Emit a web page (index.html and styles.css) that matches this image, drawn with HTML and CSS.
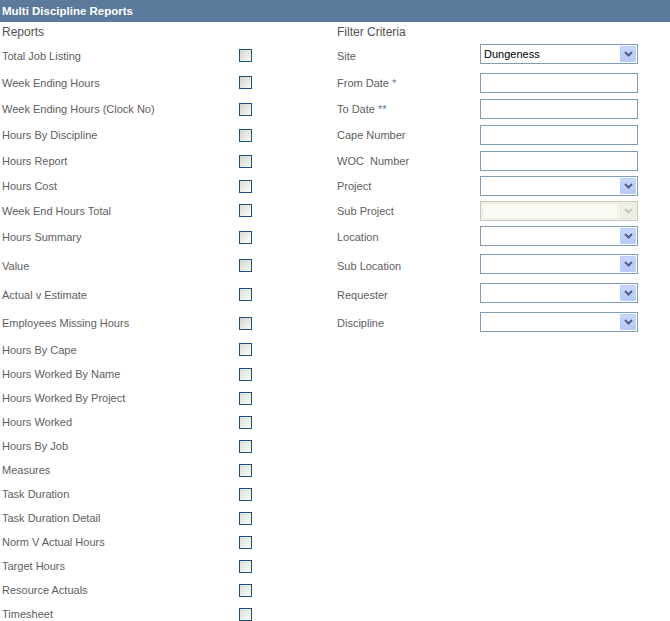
FILE: index.html
```html
<!DOCTYPE html>
<html>
<head>
<meta charset="utf-8">
<link rel="stylesheet" href="styles.css">
</head>
<body>
<div class="titlebar">Multi Discipline Reports</div>
<div class="form">
  <div class="row h20">
    <div class="heading">Reports</div><span></span>
    <div class="heading">Filter Criteria</div><span></span>
  </div>

  <div class="row h27">
    <div class="lbl">Total Job Listing</div><span class="cb grey"></span>
    <div class="lbl">Site</div>
    <div class="sel up"><span class="val">Dungeness</span><span class="btn"><svg width="9" height="6" viewBox="0 0 9 6"><path d="M1 1 L4.5 4.5 L8 1" fill="none" stroke="#4d6185" stroke-width="2"/></svg></span></div>
  </div>

  <div class="row h27">
    <div class="lbl">Week Ending Hours</div><span class="cb grey"></span>
    <div class="lbl">From Date <span class="star">*</span></div>
    <div class="inp"></div>
  </div>

  <div class="row h26">
    <div class="lbl">Week Ending Hours (Clock No)</div><span class="cb grey"></span>
    <div class="lbl">To Date <span class="star">**</span></div>
    <div class="inp"></div>
  </div>

  <div class="row h26">
    <div class="lbl">Hours By Discipline</div><span class="cb grey"></span>
    <div class="lbl">Cape Number</div>
    <div class="inp"></div>
  </div>

  <div class="row h26">
    <div class="lbl">Hours Report</div><span class="cb grey"></span>
    <div class="lbl">WOC&nbsp; Number</div>
    <div class="inp"></div>
  </div>

  <div class="row h24">
    <div class="lbl">Hours Cost</div><span class="cb"></span>
    <div class="lbl">Project</div>
    <div class="sel"><span class="val"></span><span class="btn"><svg width="9" height="6" viewBox="0 0 9 6"><path d="M1 1 L4.5 4.5 L8 1" fill="none" stroke="#4d6185" stroke-width="2"/></svg></span></div>
  </div>

  <div class="row h25">
    <div class="lbl">Week End Hours Total</div><span class="cb"></span>
    <div class="lbl">Sub Project</div>
    <div class="sel disabled"><span class="val"></span><span class="btn"><svg width="9" height="6" viewBox="0 0 9 6"><path d="M1 1 L4.5 4.5 L8 1" fill="none" stroke="#c9c7ba" stroke-width="2"/></svg></span></div>
  </div>

  <div class="row h28">
    <div class="lbl">Hours Summary</div><span class="cb"></span>
    <div class="lbl">Location</div>
    <div class="sel up"><span class="val"></span><span class="btn"><svg width="9" height="6" viewBox="0 0 9 6"><path d="M1 1 L4.5 4.5 L8 1" fill="none" stroke="#4d6185" stroke-width="2"/></svg></span></div>
  </div>

  <div class="row h29">
    <div class="lbl">Value</div><span class="cb grey"></span>
    <div class="lbl">Sub Location</div>
    <div class="sel up"><span class="val"></span><span class="btn"><svg width="9" height="6" viewBox="0 0 9 6"><path d="M1 1 L4.5 4.5 L8 1" fill="none" stroke="#4d6185" stroke-width="2"/></svg></span></div>
  </div>

  <div class="row h29">
    <div class="lbl">Actual v Estimate</div><span class="cb"></span>
    <div class="lbl">Requester</div>
    <div class="sel up"><span class="val"></span><span class="btn"><svg width="9" height="6" viewBox="0 0 9 6"><path d="M1 1 L4.5 4.5 L8 1" fill="none" stroke="#4d6185" stroke-width="2"/></svg></span></div>
  </div>

  <div class="row h28">
    <div class="lbl">Employees Missing Hours</div><span class="cb grey"></span>
    <div class="lbl">Discipline</div>
    <div class="sel up"><span class="val"></span><span class="btn"><svg width="9" height="6" viewBox="0 0 9 6"><path d="M1 1 L4.5 4.5 L8 1" fill="none" stroke="#4d6185" stroke-width="2"/></svg></span></div>
  </div>

  <div class="row h25"><div class="lbl">Hours By Cape</div><span class="cb"></span></div>
  <div class="row h24"><div class="lbl">Hours Worked By Name</div><span class="cb"></span></div>
  <div class="row h24"><div class="lbl">Hours Worked By Project</div><span class="cb"></span></div>
  <div class="row h24"><div class="lbl">Hours Worked</div><span class="cb"></span></div>
  <div class="row h24"><div class="lbl">Hours By Job</div><span class="cb"></span></div>
  <div class="row h24"><div class="lbl">Measures</div><span class="cb"></span></div>
  <div class="row h24"><div class="lbl">Task Duration</div><span class="cb"></span></div>
  <div class="row h24"><div class="lbl">Task Duration Detail</div><span class="cb"></span></div>
  <div class="row h24"><div class="lbl">Norm V Actual Hours</div><span class="cb"></span></div>
  <div class="row h24"><div class="lbl">Target Hours</div><span class="cb"></span></div>
  <div class="row h24"><div class="lbl">Resource Actuals</div><span class="cb"></span></div>
  <div class="row h24"><div class="lbl">Timesheet</div><span class="cb"></span></div>
</div>
</body>
</html>
```
FILE: styles.css
```css
html, body {
  margin: 0;
  padding: 0;
  background: #ffffff;
  font-family: "Liberation Sans", Arial, sans-serif;
  font-size: 11px;
  color: #5e5e5e;
}
.titlebar {
  height: 22px;
  line-height: 22px;
  background: #5b7a9c;
  color: #ffffff;
  font-weight: bold;
  font-size: 11.5px;
  padding-left: 2px;
}
.form {
  display: flex;
  flex-direction: column;
  padding-left: 2px;
}
.row {
  display: grid;
  grid-template-columns: 237px 13px 85px 143px 158px;
  align-items: center;
}
.row > :nth-child(3) { grid-column: 4; }
.h20 { height: 20px; }
.h24 { height: 24px; }
.h25 { height: 25px; }
.h26 { height: 26px; }
.h27 { height: 27px; }
.h28 { height: 28px; }
.h29 { height: 29px; }
.heading {
  font-size: 12px;
  color: #525252;
}
.lbl {
  white-space: nowrap;
}
.star { color: #5877a8; }
.cb {
  display: block;
  box-sizing: border-box;
  width: 13px;
  height: 13px;
  border: 1px solid #1c5180;
  background: linear-gradient(135deg, #dcdcd7 0%, #f0f0ec 60%, #fbfbf9 100%);
}
.cb.grey {
  background: linear-gradient(135deg, #d4d4cd 0%, #ebebe6 60%, #f7f7f4 100%);
}
.inp {
  box-sizing: border-box;
  height: 20px;
  width: 158px;
  border: 1px solid #7f9db9;
  background: #fff;
}
.sel {
  box-sizing: border-box;
  height: 20px;
  width: 158px;
  border: 1px solid #7f9db9;
  background: #fff;
  display: flex;
  align-items: center;
  padding: 1px;
}
.sel.up { margin-bottom: 3px; }
.sel .val {
  flex: 1;
  padding-left: 2px;
  color: #000;
  font-size: 11px;
}
.sel .btn {
  box-sizing: border-box;
  width: 16px;
  height: 16px;
  background: linear-gradient(180deg, #c8d7fc 0%, #b6c9f6 100%);
  border: 1px solid #b9cdf7;
  border-radius: 1px;
  display: flex;
  align-items: center;
  justify-content: center;
}
.sel.disabled {
  border-color: #c9c7ba;
  background: #f5f4ea;
}
.sel.disabled .val {
  align-self: stretch;
  background: #fbfbf6;
  margin-right: 2px;
  border: 1px solid #eeede4;
}
.sel.disabled .btn {
  background: #f0efe7;
  border-color: #e8e7dd;
}
```
